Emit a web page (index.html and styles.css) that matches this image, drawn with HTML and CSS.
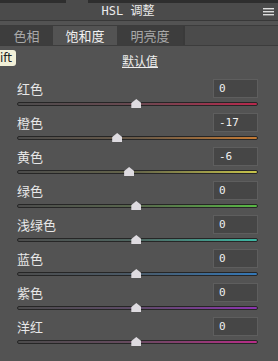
FILE: index.html
```html
<!doctype html>
<html lang="zh">
  <head>
    <meta charset="UTF-8" />
    <title>HSL 调整</title>
    <link rel="stylesheet" href="styles.css">
  </head>
  <body>
    <div class="panel">
      <div class="top-strip">
        <span class="strip-dark strip-left"></span>
        <span class="strip-dark strip-right"></span>
      </div>
      <div class="titlebar">
        <span class="title">HSL 调整</span>
        <svg class="menu-icon" width="11" height="8" viewBox="0 0 11 8">
          <rect x="0" y="0" width="11" height="1.4" fill="#ddd" />
          <rect x="0" y="3" width="11" height="1.4" fill="#ddd" />
          <rect x="0" y="6" width="11" height="1.4" fill="#ddd" />
        </svg>
      </div>
      <div class="tabs">
        <div class="tab">色相</div>
        <div class="tab active">饱和度</div>
        <div class="tab">明亮度</div>
        <div class="tab-fill"></div>
      </div>

      <div class="content">
        <div class="tooltip">ift</div>
        <div class="default-link">默认值</div>

        <div class="row">
          <div class="row-head"><span class="label">红色</span><span class="value">0</span></div>
          <div class="track red"><span class="thumb" style="left: 49.5%"></span></div>
        </div>
        <div class="row">
          <div class="row-head"><span class="label">橙色</span><span class="value">-17</span></div>
          <div class="track orange"><span class="thumb" style="left: 41.5%"></span></div>
        </div>
        <div class="row">
          <div class="row-head"><span class="label">黄色</span><span class="value">-6</span></div>
          <div class="track yellow"><span class="thumb" style="left: 46.5%"></span></div>
        </div>
        <div class="row">
          <div class="row-head"><span class="label">绿色</span><span class="value">0</span></div>
          <div class="track green"><span class="thumb" style="left: 49.5%"></span></div>
        </div>
        <div class="row">
          <div class="row-head"><span class="label">浅绿色</span><span class="value">0</span></div>
          <div class="track aqua"><span class="thumb" style="left: 49.5%"></span></div>
        </div>
        <div class="row">
          <div class="row-head"><span class="label">蓝色</span><span class="value">0</span></div>
          <div class="track blue"><span class="thumb" style="left: 49.5%"></span></div>
        </div>
        <div class="row">
          <div class="row-head"><span class="label">紫色</span><span class="value">0</span></div>
          <div class="track purple"><span class="thumb" style="left: 49.5%"></span></div>
        </div>
        <div class="row">
          <div class="row-head"><span class="label">洋红</span><span class="value">0</span></div>
          <div class="track magenta"><span class="thumb" style="left: 49.5%"></span></div>
        </div>
      </div>
    </div>
  </body>
</html>
```

FILE: styles.css
```css
body {
  margin: 0;
  background: #535353;
  font-family: "Noto Sans CJK SC", "DejaVu Sans", sans-serif;
}

.panel {
  width: 278px;
  height: 361px;
  overflow: hidden;
  background: #535353;
}

.top-strip {
  height: 3px;
  display: flex;
  background: #4b4b4b;
}

.strip-dark {
  background: #2e2e2e;
}

.strip-left {
  width: 66px;
}

.strip-right {
  margin-left: 22px;
  flex: 1;
}

.titlebar {
  height: 17px;
  display: flex;
  align-items: center;
  justify-content: center;
  position: relative;
  background: #4b4b4b;
  border-bottom: 1px solid #383838;
}

.title {
  color: #ececec;
  font-size: 12px;
  line-height: 17px;
  margin-left: -22px;
  font-family: "DejaVu Sans Mono", "Noto Sans CJK SC", monospace;
}

.menu-icon {
  position: absolute;
  right: 4px;
  top: 5px;
}

.tabs {
  margin-top: 4px;
  height: 19px;
  display: flex;
  border-top: 1px solid #3c3c3c;
  border-bottom: 1px solid #3c3c3c;
  background: #474747;
}

.tab {
  width: 53px;
  background: #3d3d3d;
  color: #a9a9a9;
  font-size: 13px;
  line-height: 19px;
  text-align: center;
}

.tab.active {
  width: 64px;
  background: #535353;
  color: #f2f2f2;
}

.tab + .tab.active + .tab {
  width: 66px;
}

.tab-fill {
  flex: 1;
  border-left: 2px solid #3a3a3a;
  background: #4b4b4b;
}

.content {
  position: relative;
  padding: 6px 20px 0 17px;
}

.tooltip {
  position: absolute;
  left: -6px;
  top: 4px;
  padding: 0 4px 0 6px;
  height: 16px;
  line-height: 16px;
  font-size: 12px;
  color: #222;
  background: #f2f0d8;
  border-radius: 3px;
  font-family: "DejaVu Sans", sans-serif;
}

.default-link {
  text-align: center;
  margin-left: 5px;
  margin-bottom: 9px;
  color: #eeeeee;
  font-size: 12px;
  line-height: 18px;
  text-decoration: underline;
}

.row {
  height: 34px;
}

.row-head {
  display: flex;
  justify-content: space-between;
  align-items: center;
  height: 19px;
}

.label {
  color: #e8e8e8;
  font-size: 13px;
}

.value {
  width: 38px;
  height: 17px;
  padding-left: 5px;
  line-height: 17px;
  color: #f0f0f0;
  font-size: 11px;
  background: #464646;
  border: 1px solid #5e5e5e;
  font-family: "DejaVu Sans Mono", monospace;
}

.track {
  position: relative;
  height: 2px;
  margin-top: 4px;
  border: 1px solid #262626;
  border-radius: 2px;
}

.thumb {
  position: absolute;
  top: -4px;
  width: 10px;
  height: 9px;
  margin-left: -5px;
  background: #dedbe0;
  clip-path: polygon(50% 0, 100% 45%, 100% 100%, 0 100%, 0 45%);
}

.red { background: linear-gradient(to right, #4c4c4c, #6a4850 50%, #b8284c); }
.orange { background: linear-gradient(to right, #4c4c4c, #6a5a48 50%, #c47a34); }
.yellow { background: linear-gradient(to right, #4c4c4c, #66664a 50%, #c8c44a); }
.green { background: linear-gradient(to right, #4c4c4c, #58664c 50%, #58b844); }
.aqua { background: linear-gradient(to right, #4c4c4c, #4e6660 50%, #3cb8a4); }
.blue { background: linear-gradient(to right, #4c4c4c, #4a5a68 50%, #3478b8); }
.purple { background: linear-gradient(to right, #4c4c4c, #5e4a68 50%, #8c34b0); }
.magenta { background: linear-gradient(to right, #4c4c4c, #684a60 50%, #b82c88); }
```
